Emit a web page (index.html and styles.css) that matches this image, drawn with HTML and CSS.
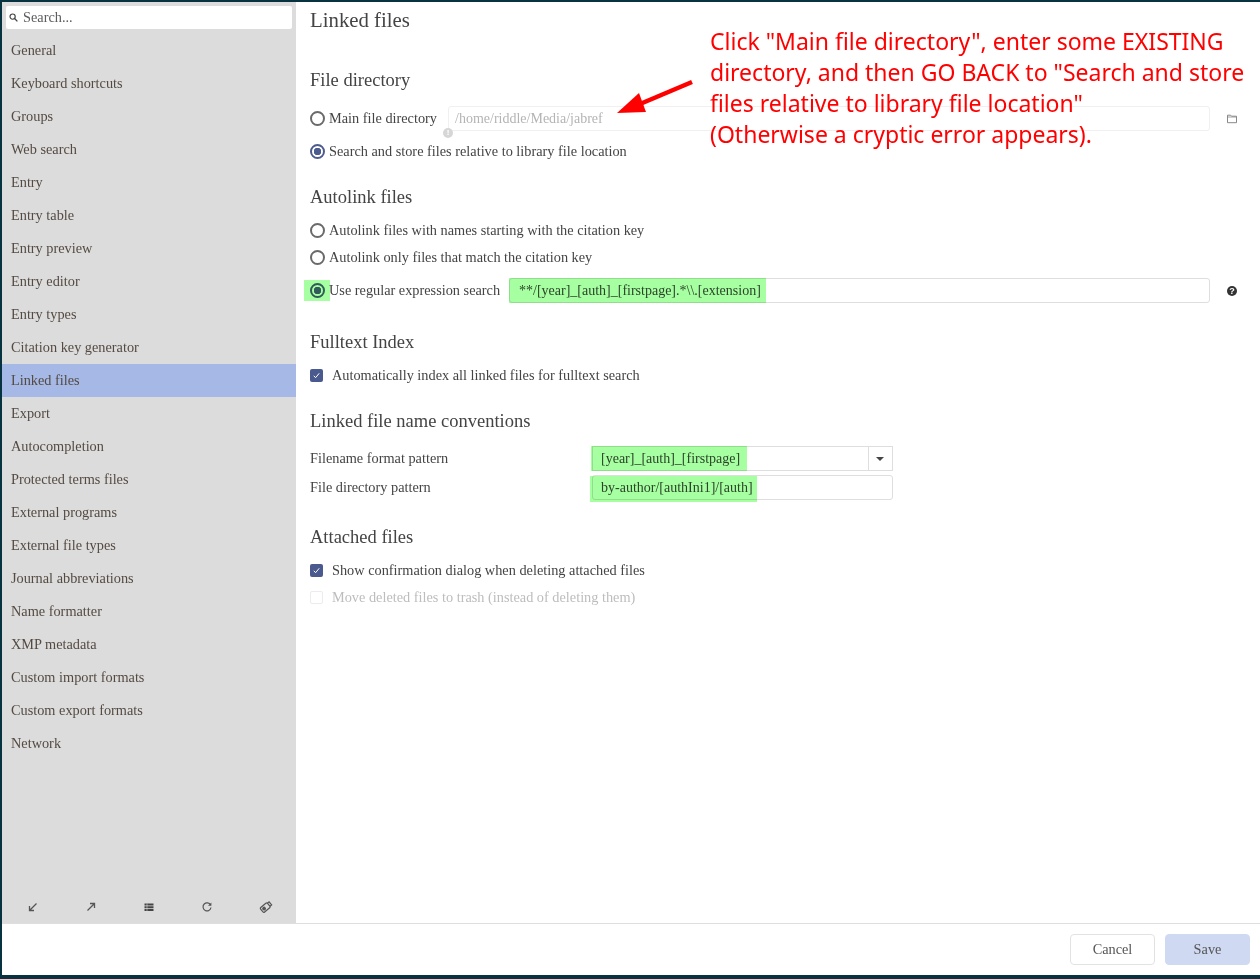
FILE: index.html
```html
<!DOCTYPE html>
<html lang="en">

<head>
    <meta charset="UTF-8">
    <title>Preferences - Linked files</title>
    <link rel="stylesheet" href="styles.css">
</head>

<body>
    <div class="window">
        <div class="panes">
            <aside class="sidebar">
                <div class="search-wrap">
                    <div class="search-box">
                        <svg class="search-icon" width="9" height="9" viewBox="0 0 10 10"><circle cx="4" cy="4" r="2.9" fill="none" stroke="#444" stroke-width="1.3"/><path d="M6.2 6.2L9.3 9.3" stroke="#444" stroke-width="1.5"/></svg>
                        <span>Search...</span>
                    </div>
                </div>
                <ul class="nav">
                    <li>General</li>
                    <li>Keyboard shortcuts</li>
                    <li>Groups</li>
                    <li>Web search</li>
                    <li>Entry</li>
                    <li>Entry table</li>
                    <li>Entry preview</li>
                    <li>Entry editor</li>
                    <li>Entry types</li>
                    <li>Citation key generator</li>
                    <li class="selected">Linked files</li>
                    <li>Export</li>
                    <li>Autocompletion</li>
                    <li>Protected terms files</li>
                    <li>External programs</li>
                    <li>External file types</li>
                    <li>Journal abbreviations</li>
                    <li>Name formatter</li>
                    <li>XMP metadata</li>
                    <li>Custom import formats</li>
                    <li>Custom export formats</li>
                    <li>Network</li>
                </ul>
                <div class="tools">
                    <svg width="12" height="12" viewBox="0 0 12 12"><path d="M9.5 2.5L3 9M2.5 5v4.5H7" fill="none" stroke="#555" stroke-width="1.3"/></svg>
                    <svg width="12" height="12" viewBox="0 0 12 12"><path d="M2.5 9.5L9 3M5 2.5h4.5V7" fill="none" stroke="#555" stroke-width="1.3"/></svg>
                    <svg width="12" height="12" viewBox="0 0 12 12"><path d="M1.5 2.5h9v2h-9zM1.5 5.2h9v2h-9zM1.5 7.9h9v2h-9z" fill="#444"/><path d="M4 2.5v7.4" stroke="#ddd" stroke-width=".6"/></svg>
                    <svg width="12" height="12" viewBox="0 0 12 12"><path d="M9.6 4A4 4 0 1 0 10 6.5" fill="none" stroke="#555" stroke-width="1.2"/><path d="M10.4 1.4v3.4H7z" fill="#555"/></svg>
                    <svg width="14" height="14" viewBox="0 0 14 14"><g transform="rotate(-40 7 7)" fill="none" stroke="#555" stroke-width="1.2"><rect x="1.5" y="4" width="9" height="6" rx="1.2"/><path d="M10.5 5h2.2v4h-2.2"/><circle cx="4.5" cy="7" r="1.3" fill="#555"/></g></svg>
                </div>
            </aside>

            <main class="content">
                <h1 class="page-title">Linked files</h1>

                <h2 class="heading heading-first">File directory</h2>
                <div class="row row-input gap-14">
                    <span class="radio"></span>
                    <label class="main-dir-label">Main file directory</label>
                    <div class="field field-disabled field-dir">/home/riddle/Media/jabref</div>
                    <svg class="side-icon" width="12" height="10" viewBox="0 0 12 10"><path d="M1.5 8.7V1.2h3.2l.8 1h5v6.5z" fill="none" stroke="#888" stroke-width="1"/><path d="M1.5 3h9" stroke="#888" stroke-width=".8"/></svg>
                </div>
                <div class="row gap-8">
                    <span class="radio radio-on"></span>
                    <label>Search and store files relative to library file location</label>
                </div>

                <h2 class="heading gap-22">Autolink files</h2>
                <div class="row gap-9">
                    <span class="radio"></span>
                    <label>Autolink files with names starting with the citation key</label>
                </div>
                <div class="row gap-3">
                    <span class="radio"></span>
                    <label>Autolink only files that match the citation key</label>
                </div>
                <div class="row row-input gap-9">
                    <span class="radio radio-on"></span>
                    <label class="regex-label">Use regular expression search</label>
                    <div class="field field-regex">**/[year]_[auth]_[firstpage].*\\.[extension]</div>
                    <svg class="side-icon" width="12" height="12" viewBox="0 0 12 12"><circle cx="6" cy="6" r="5" fill="#333"/><text x="6" y="9" text-anchor="middle" class="help-mark">?</text></svg>
                </div>

                <h2 class="heading gap-27">Fulltext Index</h2>
                <div class="row gap-9">
                    <span class="check"><svg width="9" height="9" viewBox="0 0 9 9"><path d="M1.8 4.8l1.8 1.9 3.6-4.4" fill="none" stroke="#fff" stroke-width="1"/></svg></span>
                    <label>Automatically index all linked files for fulltext search</label>
                </div>

                <h2 class="heading gap-22">Linked file name conventions</h2>
                <div class="row row-input gap-13">
                    <label class="pattern-label">Filename format pattern</label>
                    <div class="field field-pattern field-combo">
                        <span class="combo-text">[year]_[auth]_[firstpage]</span>
                        <span class="combo-arrow"></span>
                    </div>
                </div>
                <div class="row row-input gap-4">
                    <label class="pattern-label">File directory pattern</label>
                    <div class="field field-pattern">by-author/[authIni1]/[auth]</div>
                </div>

                <h2 class="heading gap-25">Attached files</h2>
                <div class="row gap-9">
                    <span class="check"><svg width="9" height="9" viewBox="0 0 9 9"><path d="M1.8 4.8l1.8 1.9 3.6-4.4" fill="none" stroke="#fff" stroke-width="1"/></svg></span>
                    <label>Show confirmation dialog when deleting attached files</label>
                </div>
                <div class="row gap-3 row-disabled">
                    <span class="check check-off"></span>
                    <label>Move deleted files to trash (instead of deleting them)</label>
                </div>
            </main>
        </div>

        <footer class="footer">
            <button class="btn btn-cancel">Cancel</button>
            <button class="btn btn-save">Save</button>
        </footer>
    </div>

    <!-- things drawn on top of the screenshot -->
    <div class="mark mark-radio"></div>
    <div class="mark mark-regex"></div>
    <div class="mark mark-name"></div>
    <div class="mark mark-dir"></div>
    <span class="warn-dot">!</span>
    <svg class="arrow" width="90" height="50" viewBox="0 0 90 50"><path d="M82 6L30 28" stroke="#f00" stroke-width="4.5"/><path d="M7 37L29 17 36 36z" fill="#f00"/></svg>
    <p class="note">Click "Main file directory", enter some EXISTING<br>directory, and then GO BACK to "Search and store<br>files relative to library file location"<br>(Otherwise a cryptic error appears).</p>
</body>

</html>
```
FILE: styles.css
```css
/* Page frame */
html,
body {
    margin: 0;
    padding: 0;
    height: 100%;
}

body {
    font-family: "Liberation Serif", "DejaVu Serif", serif;
    background-color: #06333f;
    color: #444;
    font-size: 14.3px;
    position: relative;
    overflow: hidden;
}

.window {
    box-sizing: border-box;
    height: 979px;
    padding: 2px 0 4px 2px;
    display: flex;
    flex-direction: column;
}

.panes {
    flex: 1;
    display: flex;
    background-color: #fff;
    min-height: 0;
}

/* Sidebar */
.sidebar {
    width: 294px;
    background-color: #dcdcdc;
    display: flex;
    flex-direction: column;
}

.search-wrap {
    padding: 4px 4px 5px 4px;
}

.search-box {
    height: 23px;
    background-color: #fff;
    border-radius: 2px;
    display: flex;
    align-items: center;
    padding-left: 3px;
    gap: 5px;
    color: #5c5c5c;
}

.nav {
    list-style: none;
    margin: 0;
    padding: 0;
    flex: 1;
}

.nav li {
    height: 33px;
    line-height: 33px;
    padding-left: 9px;
    color: #544a42;
}

.nav li.selected {
    background-color: #a5b8e6;
}

.tools {
    height: 33px;
    display: flex;
    justify-content: space-between;
    align-items: center;
    padding: 0 23px 0 25px;
}

/* Main content */
.content {
    flex: 1;
    padding: 7px 0 0 14px;
}

.page-title {
    margin: 0;
    font-size: 20.8px;
    font-weight: normal;
    height: 24px;
    line-height: 22px;
}

.heading {
    margin: 0;
    font-size: 18.5px;
    font-weight: normal;
    height: 24px;
    line-height: 24px;
}

.heading-first {
    margin-top: 35px;
}

.row {
    display: flex;
    align-items: center;
    height: 24px;
}

.row-input {
    height: 25px;
}

.row label {
    padding-top: 1px;
}

.row-input label {
    padding-top: 0;
}

.gap-3 { margin-top: 3px; }
.gap-4 { margin-top: 4px; }
.gap-8 { margin-top: 8px; }
.gap-9 { margin-top: 9px; }
.gap-13 { margin-top: 13px; }
.gap-14 { margin-top: 14px; }
.gap-22 { margin-top: 22px; }
.gap-25 { margin-top: 25px; }
.gap-27 { margin-top: 27px; }

.radio {
    box-sizing: border-box;
    width: 15px;
    height: 15px;
    border: 2px solid #6a6a6a;
    border-radius: 50%;
    margin-right: 4px;
    background-color: #fff;
    flex-shrink: 0;
}

.radio-on {
    border-color: #4d5c8e;
    background: radial-gradient(circle, #4d5c8e 0 3.5px, #fff 4px);
}

.check {
    box-sizing: border-box;
    width: 13px;
    height: 13px;
    background-color: #4a5a8e;
    border-radius: 2px;
    margin-right: 9px;
    display: flex;
    align-items: center;
    justify-content: center;
}

.check-off {
    background-color: #fff;
    border: 1px solid #ececec;
}

.row-disabled {
    color: #bdbdbd;
}

.field {
    box-sizing: border-box;
    height: 25px;
    line-height: 23px;
    font-size: 14px;
    border: 1px solid #dedede;
    border-radius: 3px;
    padding-left: 9px;
    background-color: #fff;
}

.field-disabled {
    border-color: #f0f0f0;
    color: #b4b4b4;
    padding-left: 6px;
}

.main-dir-label {
    width: 119px;
}

.field-dir {
    width: 762px;
}

.regex-label {
    width: 180px;
}

.field-regex {
    width: 701px;
}

.side-icon {
    margin-left: 16px;
}

.help-mark {
    font-family: "Liberation Sans", sans-serif;
    font-size: 9px;
    font-weight: bold;
    fill: #fff;
}

.pattern-label {
    width: 282px;
}

.field-pattern {
    width: 301px;
    padding-left: 8px;
}

.field-combo {
    display: flex;
    padding: 0 0 0 8px;
    border-radius: 0;
}

.combo-text {
    flex: 1;
}

.combo-arrow {
    width: 23px;
    border-left: 1px solid #dedede;
    position: relative;
}

.combo-arrow::after {
    content: "";
    position: absolute;
    left: 7px;
    top: 10px;
    border-left: 4px solid transparent;
    border-right: 4px solid transparent;
    border-top: 4px solid #444;
}

/* Footer */
.footer {
    height: 52px;
    box-sizing: border-box;
    background-color: #fff;
    border-top: 1px solid #dedede;
    display: flex;
    justify-content: flex-end;
    align-items: center;
    gap: 10px;
    padding: 0 10px 0 0;
}

.btn {
    width: 85px;
    height: 31px;
    border-radius: 4px;
    font-family: inherit;
    font-size: 14.3px;
    color: #555;
    padding: 0;
}

.btn-cancel {
    background-color: #fff;
    border: 1px solid #e2e2e2;
}

.btn-save {
    background-color: #cfd9f1;
    border: 1px solid #cfd9f1;
}

/* Annotations over the window */
.mark {
    position: absolute;
    background-color: #a6ffa0;
    mix-blend-mode: multiply;
}

.mark-radio {
    left: 304px;
    top: 280px;
    width: 26px;
    height: 21px;
}

.mark-regex {
    left: 509px;
    top: 278px;
    width: 257px;
    height: 25px;
}

.mark-name {
    left: 591px;
    top: 446px;
    width: 156px;
    height: 25px;
}

.mark-dir {
    left: 590px;
    top: 476px;
    width: 167px;
    height: 26px;
}

.warn-dot {
    position: absolute;
    left: 443px;
    top: 128px;
    width: 10px;
    height: 10px;
    border-radius: 50%;
    background-color: #d6d6d6;
    color: #fff;
    font: bold 8px/10px "Liberation Sans", sans-serif;
    text-align: center;
}

.arrow {
    position: absolute;
    left: 610px;
    top: 76px;
}

.note {
    position: absolute;
    left: 710px;
    top: 26px;
    margin: 0;
    font-family: "Noto Sans", sans-serif;
    font-size: 23px;
    line-height: 31px;
    color: #f00;
    white-space: nowrap;
}
```
